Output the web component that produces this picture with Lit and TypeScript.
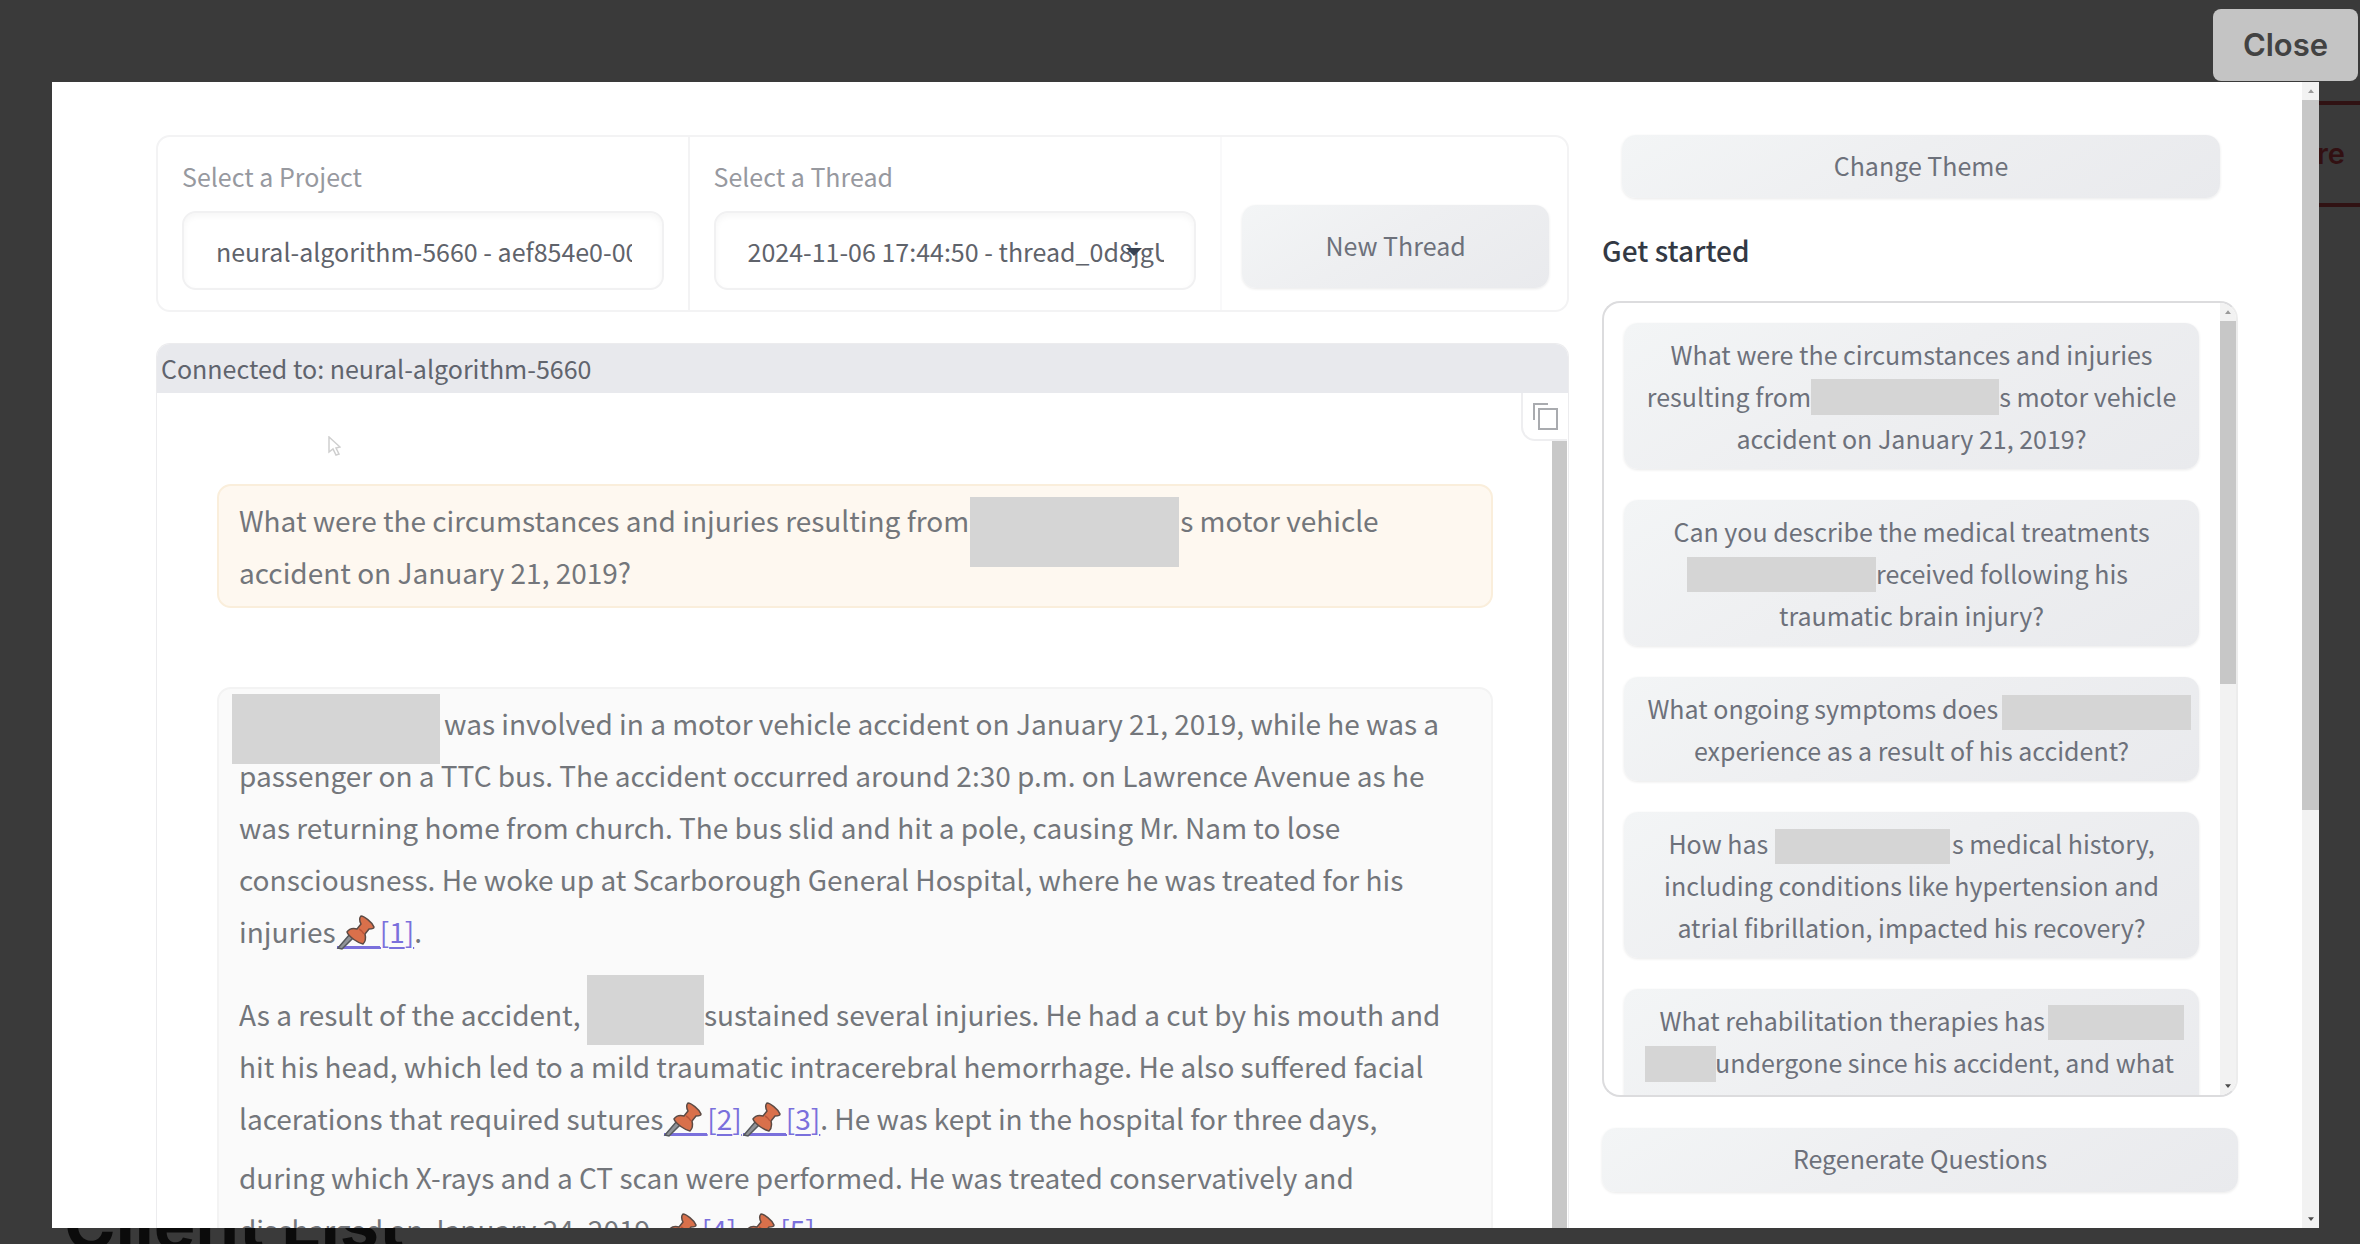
import { LitElement, html, css, svg, nothing } from "lit";
import { customElement, property } from "lit/decorators.js";
import { styleMap } from "lit/directives/style-map.js";

/* A masked name: `space` is the room kept in the line, the rest describes the box over it. */
const mask = (space: number, width: number, height: number, top: number, left = 0) => html`<span
  class="mask"
  style=${styleMap({ width: `${space}px` })}
  ><span
    class="mask-box"
    style=${styleMap({ width: `${width}px`, height: `${height}px`, top: `${top}px`, left: `${left}px` })}
  ></span
></span>`;

const maskStyles = css`
  .mask {
    display: inline-block;
    position: relative;
    height: 1px;
    vertical-align: baseline;
  }
  .mask-box {
    position: absolute;
    background: #d5d5d5;
  }
`;

const softButton = css`
  button {
    font: inherit;
    color: #6d717b;
    border: 0;
    margin: 0;
    padding: 0 0 4px;
    cursor: pointer;
    border-radius: 14px;
    background: linear-gradient(150deg, #f3f5f6, #eeeff1 45%, #e9eaed);
    box-shadow: 0 1px 3px rgba(0, 0, 0, 0.09);
  }
`;

@customElement("scroll-track")
export class ScrollTrack extends LitElement {
  @property({ type: Number }) size = 50;
  static styles = css`
    :host {
      display: flex;
      flex-direction: column;
      background: #f2f2f2;
    }
    .cap {
      height: 18px;
      display: grid;
      place-items: center;
      flex: none;
    }
    .run {
      flex: 1;
      min-height: 0;
    }
    .thumb {
      background: #c7c7c7;
    }
  `;
  render() {
    return html`
      <div class="cap"><svg width="6" height="4" viewBox="0 0 8 5"><path d="M4 0 8 5H0z" fill="#9a9a9a" /></svg></div>
      <div class="run"><div class="thumb" style=${styleMap({ height: `${this.size}%` })}></div></div>
      <div class="cap"><svg width="6" height="4" viewBox="0 0 8 5"><path d="M4 5 8 0H0z" fill="#4c4c4c" /></svg></div>
    `;
  }
}

@customElement("thread-picker")
export class ThreadPicker extends LitElement {
  static styles = [
    softButton,
    css`
      :host {
        display: grid;
        grid-template-columns: 533fr 534fr 346fr;
        border: 2px solid #f3f3f4;
        border-radius: 14px;
        box-sizing: border-box;
      }
      .cell {
        padding: 22px 24px 20px;
        border-right: 2px solid #f3f3f4;
        display: flex;
        flex-direction: column;
        gap: 18px;
        min-width: 0;
      }
      .cell + .cell {
        border-right-color: #f9f9fa;
      }
      label {
        color: #97999f;
        line-height: 34px;
      }
      .field {
        position: relative;
        display: flex;
      }
      select {
        appearance: none;
        font: inherit;
        color: #5f636b;
        width: 100%;
        height: 79px;
        padding: 0 30px 0 32px;
        border: 2px solid #f1f1f2;
        border-radius: 14px;
        background: #fff;
        box-shadow: inset 0 3px 6px rgba(0, 0, 0, 0.04);
        text-overflow: clip;
      }
      .caret {
        position: absolute;
        right: 54px;
        top: 36px;
        pointer-events: none;
      }
      .action {
        padding: 68px 18px 22px 20px;
        display: flex;
      }
      .action button {
        flex: 1;
        height: 83px;
      }
    `,
  ];
  render() {
    return html`
      <div class="cell">
        <label for="project">Select a Project</label>
        <div class="field">
          <select id="project"><option>neural-algorithm-5660 - aef854e0-00</option></select>
        </div>
      </div>
      <div class="cell">
        <label for="thread">Select a Thread</label>
        <div class="field">
          <select id="thread"><option>2024-11-06 17:44:50 - thread_0d8jgU</option></select>
          <svg class="caret" width="16" height="9" viewBox="0 0 16 9"><path d="M0 1h16L8 9z" fill="#374151" /></svg>
        </div>
      </div>
      <div class="action"><button type="button">New Thread</button></div>
    `;
  }
}

const pin = svg`
  <path d="M1 33.500H44" stroke="#7a70dc" stroke-width="3"/>
  <path d="M2 34 14 20l4 3L6 35z" fill="#8f9297" stroke="#55585c" stroke-width="1.500"/>
  <path d="M25 2c3 0 11 6 13 11 0 2-3 2-5 2l-4 5c1 4 0 8-2 10-5-1-14-7-16-12 2-3 6-4 10-3l4-5c-1-2-2-6 0-8z" fill="#d9704b" stroke="#5c4a44" stroke-width="1.500" stroke-linejoin="round"/>
  <path d="M23 15c2 1 4 3 5 5" fill="none" stroke="#b9553a" stroke-width="1.500"/>`;

const cite = (n: number) => html`<a href=${`#source-${n}`}
  ><svg width="44" height="36" viewBox="0 0 44 36" aria-hidden="true">${pin}</svg>[${n}]</a
>`;

@customElement("chat-panel")
export class ChatPanel extends LitElement {
  static styles = [
    maskStyles,
    css`
      :host {
        display: grid;
        grid-template-rows: 49px minmax(0, 1fr);
        border: 1px solid #ececee;
        border-bottom: 0;
        border-radius: 14px 14px 0 0;
        overflow: hidden;
        box-sizing: border-box;
      }
      header {
        background: #e8e9ed;
        color: #60646d;
        padding: 0 4px;
        line-height: 48px;
      }
      .body {
        display: grid;
        grid-template-columns: minmax(0, 1fr) 16px;
        position: relative;
        min-height: 0;
      }
      .messages {
        padding: 91px 59px 0 60px;
        display: flex;
        flex-direction: column;
        gap: 79px;
        overflow: hidden;
        font-size: 28px;
        line-height: 52px;
        color: #73767b;
      }
      .message {
        flex: none;
        border: 2px solid #f3f3f3;
        border-radius: 14px;
        background: #fafafa;
        padding: 8px 30px 8px 20px;
      }
      .mine {
        background: #fef8f0;
        border-color: #faeedb;
      }
      p {
        margin: 0 0 31px;
      }
      .mine p {
        margin: 0;
        padding-right: 52px;
      }
      a {
        color: #7a70dc;
        text-decoration: underline;
        text-decoration-thickness: 2px;
        text-underline-offset: 4px;
      }
      a svg {
        vertical-align: -7px;
      }
      .cites {
        display: inline-block;
        padding-bottom: 7px;
      }
      .copy {
        position: absolute;
        top: 0;
        right: 1px;
        width: 46px;
        height: 48px;
        padding: 0;
        display: grid;
        place-items: center;
        background: #fff;
        border: 2px solid #eeeef0;
        border-top: 0;
        border-right: 0;
        border-radius: 0 0 0 14px;
        color: #a9abaf;
      }
      .track {
        background: #c8c8c8;
        margin: 46px 1px 0 0;
      }
      .pointer {
        position: absolute;
        left: 171px;
        top: 43px;
      }
    `,
  ];
  render() {
    return html`
      <header>Connected to: neural-algorithm-5660</header>
      <div class="body">
        <div class="messages">
          <div class="message mine">
            <p>
              What were the circumstances and injuries resulting from${mask(211, 209, 70, -34, 1)}s motor vehicle
              accident on January 21, 2019?
            </p>
          </div>
          <div class="message">
            <p>
              ${mask(205, 208, 70, -40, -7)}was involved in a motor vehicle accident on January 21, 2019, while he was a
              passenger on a TTC bus. The accident occurred around 2:30 p.m. on Lawrence Avenue as he was returning home
              from church. The bus slid and hit a pole, causing Mr. Nam to lose consciousness. He woke up at Scarborough
              General Hospital, where he was treated for his injuries${cite(1)}.
            </p>
            <p>
              As a result of the accident, ${mask(117, 117, 70, -50)}sustained several injuries. He had a cut by his
              mouth and hit his head, which led to a mild traumatic intracerebral hemorrhage. He also suffered facial
              lacerations that required sutures<span class="cites">${cite(2)}${cite(3)}</span>. He was kept in the
              hospital for three days, during which X-rays and a CT scan were performed. He was treated conservatively
              and discharged on January 24, 2019.<span class="cites">${cite(4)}${cite(5)}</span>
            </p>
          </div>
        </div>
        <div class="track"></div>
        <button class="copy" type="button" aria-label="Copy">
          <svg width="26" height="28" viewBox="0 0 26 28" fill="none" stroke="currentColor" stroke-width="2">
            <path d="M2 18V2h14" />
            <rect x="7" y="7" width="18" height="20" />
          </svg>
        </button>
        <svg class="pointer" width="13" height="20" viewBox="0 0 13 20">
          <path d="M1 1v15l4-3 3 6 3-1-3-6 4-1z" fill="#fff" stroke="#cfcfcf" stroke-width="1.500" />
        </svg>
      </div>
    `;
  }
}

const questions = [
  [
    "What were the circumstances and injuries",
    html`resulting from${mask(188, 188, 36, -27)}s motor vehicle`,
    "accident on January 21, 2019?",
  ],
  [
    "Can you describe the medical treatments",
    html`${mask(181, 189, 35, -26, -8)}received following his`,
    "traumatic brain injury?",
  ],
  [html`What ongoing symptoms does ${mask(172, 189, 35, -23, -2)}`, "experience as a result of his accident?"],
  [
    html`How has ${mask(178, 175, 35, -24, 1)}s medical history,`,
    "including conditions like hypertension and",
    "atrial fibrillation, impacted his recovery?",
  ],
  [
    html`What rehabilitation therapies has ${mask(113, 136, 35, -25, -3)}`,
    html`${mask(66, 71, 36, -26, -4)}undergone since his accident, and what`,
    nothing,
  ],
];

@customElement("question-rail")
export class QuestionRail extends LitElement {
  static styles = [
    maskStyles,
    softButton,
    css`
      :host {
        display: flex;
        flex-direction: column;
      }
      .theme {
        margin: 0 18px 0 20px;
        height: 63px;
      }
      h2 {
        margin: 32px 0 31px;
        font-size: 28px;
        line-height: 40px;
        font-weight: 500;
        color: #333944;
      }
      .box {
        height: 796px;
        box-sizing: border-box;
        display: grid;
        grid-template-columns: minmax(0, 1fr) 16px;
        border: 2px solid #dcdcde;
        border-right-color: #ececec;
        border-radius: 18px;
        overflow: hidden;
      }
      .list {
        overflow: hidden;
        padding: 20px 21px 0 20px;
        display: flex;
        flex-direction: column;
        gap: 31px;
      }
      .list button {
        flex: none;
        padding: 10px 0;
        line-height: 42px;
        min-height: 104px;
      }
      .line {
        display: block;
        min-height: 42px;
        white-space: nowrap;
      }
      .again {
        margin-top: 31px;
        height: 64px;
      }
    `,
  ];
  render() {
    return html`
      <button class="theme" type="button">Change Theme</button>
      <h2>Get started</h2>
      <div class="box">
        <div class="list">
          ${questions.map(
            (q) => html`<button type="button">${q.map((line) => html`<span class="line">${line}</span>`)}</button>`,
          )}
        </div>
        <scroll-track size="48"></scroll-track>
      </div>
      <button class="again" type="button">Regenerate Questions</button>
    `;
  }
}

@customElement("app-root")
export class AppRoot extends LitElement {
  static styles = css`
    :host {
      display: block;
      position: relative;
      height: 100vh;
      box-sizing: border-box;
      overflow: hidden;
      padding: 82px 41px 16px 52px;
      background: #3a3a3a;
      font: 25px/34px "Noto Sans CJK SC", "Noto Sans", sans-serif;
    }
    .under {
      position: absolute;
      font-family: Inter, "Liberation Sans", sans-serif;
    }
    .outline {
      top: 101px;
      right: -20px;
      width: 200px;
      height: 106px;
      box-sizing: border-box;
      border: 4px solid #301213;
      color: #321012;
      font-size: 29px;
      font-weight: 600;
      line-height: 98px;
      text-align: right;
      padding-right: 31px;
    }
    .title {
      left: 64px;
      bottom: -20px;
      margin: 0;
      color: #0b0b0b;
      font-size: 70px;
      line-height: 80px;
      font-weight: 700;
    }
    .close {
      position: absolute;
      top: 9px;
      right: 2px;
      width: 145px;
      height: 72px;
      border: 0;
      border-radius: 8px;
      background: #c4c4c4;
      color: #424242;
      font: 600 31px/40px Inter, "Liberation Sans", sans-serif;
    }
    .dialog {
      position: relative;
      height: 100%;
      background: #fff;
      display: grid;
      grid-template-columns: minmax(0, 1fr) 17px;
      overflow: hidden;
    }
    .content {
      display: grid;
      grid-template-columns: minmax(0, 20fr) minmax(0, 9fr);
      column-gap: 33px;
      padding: 53px 64px 0 104px;
      min-height: 0;
    }
    .main {
      display: grid;
      grid-template-rows: auto minmax(0, 1fr);
      row-gap: 31px;
      min-height: 0;
    }
  `;
  render() {
    return html`
      <div class="under outline">re</div>
      <h1 class="under title">Client List</h1>
      <div class="dialog" role="dialog" aria-label="Chat">
        <div class="content">
          <div class="main">
            <thread-picker></thread-picker>
            <chat-panel></chat-panel>
          </div>
          <question-rail></question-rail>
        </div>
        <scroll-track size="64"></scroll-track>
      </div>
      <button class="close" type="button">Close</button>
    `;
  }
}
